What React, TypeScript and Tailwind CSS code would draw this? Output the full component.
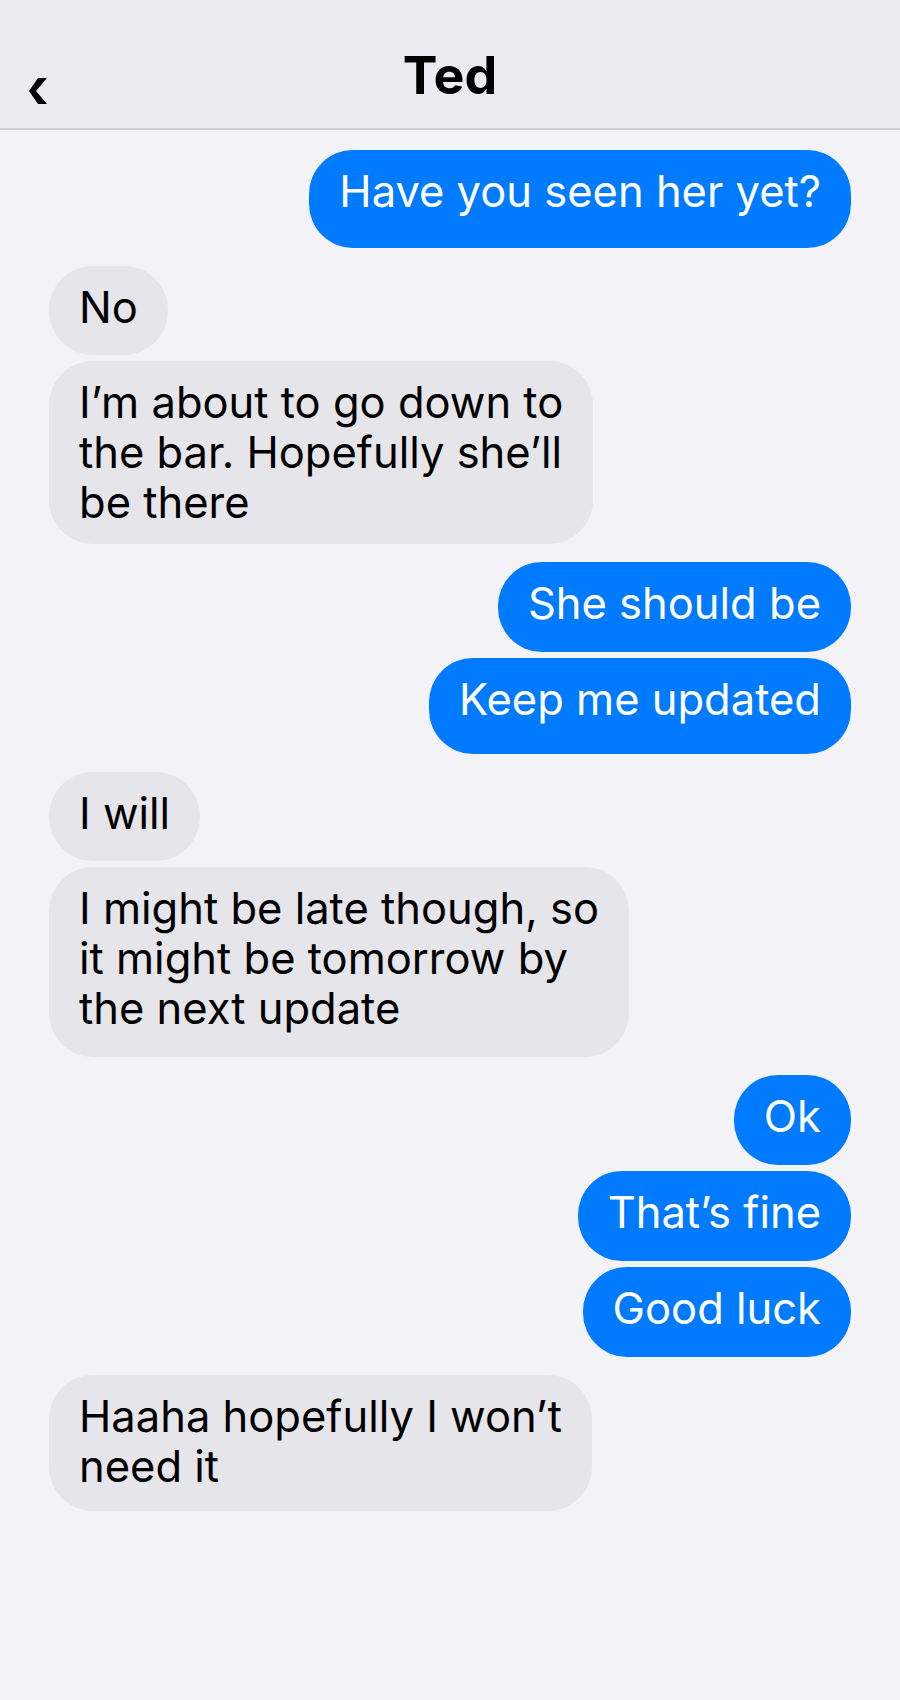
import React from 'react';

interface Message {
    lines: string[];
    sent: boolean;
    pb: string;
}

// bottom padding per bubble, so heights follow the screenshot (descenders make some taller)
const messages: Message[] = [
    { lines: ['Have you seen her yet?'], sent: true, pb: 'pb-[32px]' },
    { lines: ['No'], sent: false, pb: 'pb-[23px]' },
    { lines: ['I’m about to go down to', 'the bar. Hopefully she’ll', 'be there'], sent: false, pb: 'pb-[17px]' },
    { lines: ['She should be'], sent: true, pb: 'pb-[24px]' },
    { lines: ['Keep me updated'], sent: true, pb: 'pb-[30px]' },
    { lines: ['I will'], sent: false, pb: 'pb-[23px]' },
    { lines: ['I might be late though, so', 'it might be tomorrow by', 'the next update'], sent: false, pb: 'pb-[24px]' },
    { lines: ['Ok'], sent: true, pb: 'pb-[24px]' },
    { lines: ['That’s fine'], sent: true, pb: 'pb-[24px]' },
    { lines: ['Good luck'], sent: true, pb: 'pb-[24px]' },
    { lines: ['Haaha hopefully I won’t', 'need it'], sent: false, pb: 'pb-[20px]' },
];

const Bubble: React.FC<{ message: Message; gap: string }> = ({ message, gap }) => (
    <div className={`flex ${message.sent ? 'justify-end' : 'justify-start'} ${gap}`}>
        <div
            className={`rounded-[44px] px-[30px] pt-[16px] text-[43.5px] leading-[50px] whitespace-nowrap ${message.pb} ${
                message.sent ? 'bg-[#007aff] text-white' : 'bg-[#e5e5ea] text-black'
            }`}
        >
            {message.lines.map((line, index) => (
                <div key={index}>{line}</div>
            ))}
        </div>
    </div>
);

const App: React.FC = () => {
    return (
        <div className="min-h-screen bg-[#f2f2f7] font-['Inter',sans-serif]">
            <header className="grid h-[130px] grid-cols-[1fr_auto_1fr] border-b-2 border-[#d1d1d6] bg-[#ebebf0]">
                <div className="pl-[29px] pt-[78px]">
                    <svg width="18" height="26" viewBox="0 0 18 26">
                        <polygon points="9,0 18,0 7,13 18,26 9,26 0,13" fill="#000" />
                    </svg>
                </div>
                <h1 className="pt-[50px] text-[52px] font-bold leading-none text-black">Ted</h1>
                <div />
            </header>
            <main className="flex flex-col px-[49px] pt-[20px] pb-10">
                {messages.map((message, index) => {
                    const prev = messages[index - 1];
                    const gap = !prev ? '' : prev.sent === message.sent ? 'mt-[6px]' : 'mt-[18px]';
                    return <Bubble key={index} message={message} gap={gap} />;
                })}
            </main>
        </div>
    );
};

export default App;
